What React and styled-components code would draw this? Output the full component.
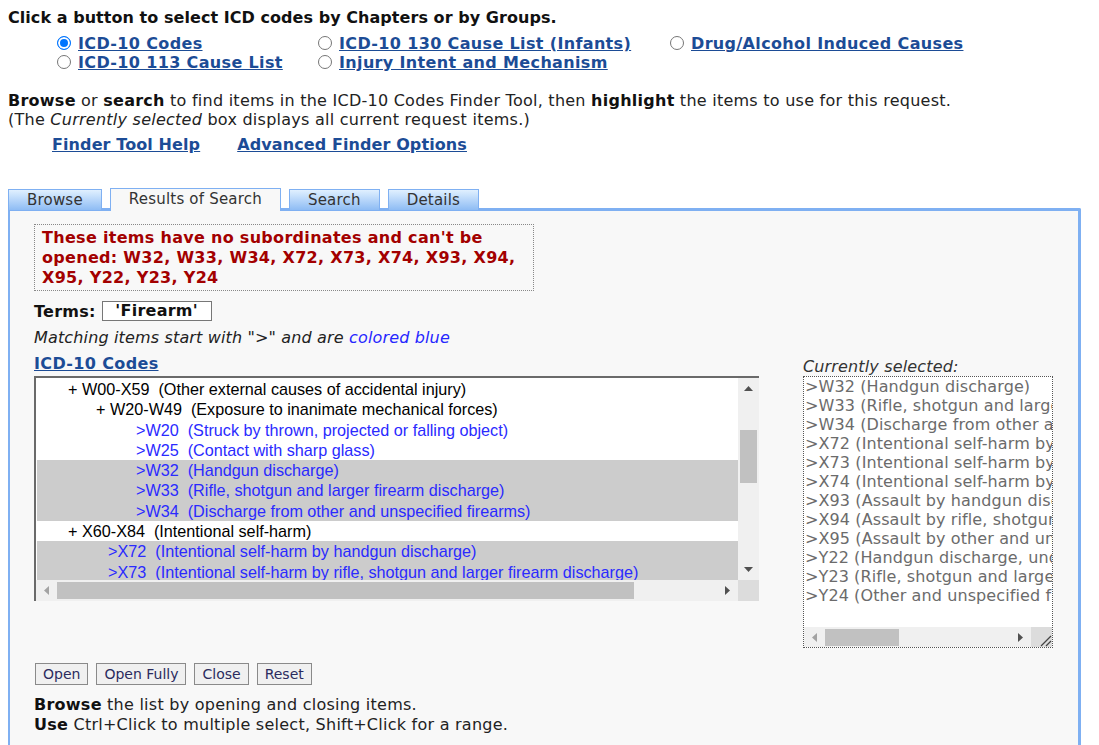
import React from "react";
import styled, { createGlobalStyle } from "styled-components";

const GlobalStyle = createGlobalStyle`
  body {
    margin: 8px;
    background: #fff;
    font-family: "DejaVu Sans", Verdana, sans-serif;
    font-size: 16px;
    letter-spacing: 0.25px;
    color: #222;
  }
`;

const Heading = styled.div`
  font-weight: bold;
  line-height: 19px;
  letter-spacing: 0.05px;
  color: #111;
`;

const ChoiceGrid = styled.div`
  display: grid;
  grid-template-columns: 261px 352px auto;
  margin: 7px 0 0 49px;
`;

const Choice = styled.label`
  display: flex;
  align-items: flex-start;
  gap: 7px;
  line-height: 19px;
`;

const Radio = styled.input`
  appearance: none;
  flex: none;
  width: 14px;
  height: 14px;
  margin: 2px 0 0;
  box-sizing: border-box;
  border-radius: 50%;
  border: 1px solid #767676;
  background: #fff;

  &:checked {
    border: 1.5px solid #0075ff;
    background: #0075ff;
    box-shadow: inset 0 0 0 2px #fff;
  }
`;

const BlueLink = styled.a`
  font-weight: bold;
  color: #1c4c96;
  text-decoration: underline;
  letter-spacing: ${({ tight }) => (tight ? "0.1px" : "0.35px")};
  cursor: pointer;
`;

const Intro = styled.div`
  margin-top: 19px;
  line-height: 19px;
`;

const HelpLinks = styled.div`
  display: flex;
  gap: 37px;
  padding-left: 44px;
  margin-top: 6px;
  line-height: 19px;
`;

const TabBar = styled.div`
  display: flex;
  align-items: flex-end;
  gap: 8px;
  margin-top: 34px;
  margin-bottom: -3px;
  position: relative;
  z-index: 1;
`;

const Tab = styled.div`
  box-sizing: border-box;
  height: ${({ active }) => (active ? "23px" : "22px")};
  padding: 0 18px;
  font-size: 15px;
  letter-spacing: 0.2px;
  line-height: 21px;
  color: #333;
  border: 1px solid #7fb0f2;
  border-bottom: ${({ active }) => (active ? "none" : "1px solid #7fb0f2")};
  background: ${({ active }) =>
    active ? "#f8f8f8" : "linear-gradient(#e0f0ff, #8ebcf4)"};
  cursor: pointer;
`;

const Panel = styled.div`
  width: 1073px;
  box-sizing: border-box;
  background: #f8f8f8;
  border-top: 3px solid #7fb0f2;
  border-left: 2px solid #7fb0f2;
  border-right: 3px solid #7fb0f2;
  border-top-right-radius: 2px;
  padding: 13px 0 40px 24px;
`;

const Notice = styled.div`
  width: 500px;
  box-sizing: border-box;
  border: 1px dotted #888;
  padding: 3px 7px 2px;
  color: #a30000;
  font-weight: bold;
  letter-spacing: 0.3px;
  line-height: 20px;
  white-space: nowrap;
`;

const TermsRow = styled.div`
  display: flex;
  align-items: center;
  gap: 6px;
  margin-top: 10px;
`;

const Bold = styled.span`
  font-weight: bold;
  color: #111;
`;

const TermsValue = styled.div`
  width: 110px;
  box-sizing: border-box;
  border: 1px solid #777;
  background: #fff;
  font-weight: bold;
  color: #111;
  text-align: center;
  line-height: 18px;
`;

const Hint = styled.div`
  margin-top: 7px;
  font-style: italic;
  letter-spacing: 0.15px;
  line-height: 19px;
`;

const BlueWord = styled.span`
  color: #2626ff;
`;

const Columns = styled.div`
  display: flex;
  align-items: flex-start;
  gap: 44px;
  margin-top: 7px;
`;

const TreeColumn = styled.div`
  width: 725px;
  line-height: 19px;
`;

const TreeBox = styled.div`
  margin-top: 3px;
  width: 725px;
  height: 225px;
  box-sizing: border-box;
  border-top: 2px solid #6a6a6a;
  border-left: 2px solid #6a6a6a;
  background: #fff;
  display: grid;
  grid-template-columns: 1fr 21px;
  grid-template-rows: 1fr 21px;
`;

const TreeList = styled.div`
  overflow: hidden;
  padding: 1px 0 0 1px;
  font-family: "Liberation Sans", Arial, sans-serif;
  font-size: 16.2px;
  letter-spacing: 0;
`;

const TreeRow = styled.div`
  line-height: 20.3px;
  white-space: pre;
  padding-left: ${({ indent }) => indent}px;
  color: ${({ leaf }) => (leaf ? "#2a2aff" : "#000")};
  background: ${({ selected }) => (selected ? "#cccccc" : "transparent")};
`;

const VScroll = styled.div`
  background: #f0f0f0;
  display: flex;
  flex-direction: column;
  align-items: center;
`;

const HScroll = styled.div`
  background: #f0f0f0;
  display: flex;
  align-items: center;
`;

const ArrowCell = styled.div`
  flex: none;
  width: 21px;
  height: ${({ vertical }) => (vertical ? "21px" : "100%")};
  display: flex;
  align-items: center;
  justify-content: center;
`;

const VThumb = styled.div`
  width: 17px;
  height: 53px;
  margin-top: 31px;
  background: #c1c1c1;
`;

const HThumb = styled.div`
  height: 17px;
  width: ${({ size }) => size}px;
  background: #c1c1c1;
`;

const Spacer = styled.div`
  flex: 1;
`;

const Corner = styled.div`
  flex: none;
  width: 21px;
  height: 100%;
  background: #dcdcdc;
  display: flex;
  align-items: flex-end;
  justify-content: flex-end;
`;

const SelectedColumn = styled.div`
  width: 250px;
  padding-top: 3px;
`;

const SelectedLabel = styled.div`
  font-style: italic;
  letter-spacing: 0.15px;
  line-height: 19px;
  color: #333;
`;

const SelectedBox = styled.div`
  width: 250px;
  height: 272px;
  box-sizing: border-box;
  border: 1px dotted #555;
  background: #fff;
  display: flex;
  flex-direction: column;
`;

const SelectedList = styled.div`
  flex: 1;
  overflow: hidden;
  padding-left: 1px;
`;

const SelectedItem = styled.div`
  line-height: 19px;
  color: #6b6b6b;
  letter-spacing: 0.1px;
  white-space: nowrap;
`;

const SelectedScroll = styled(HScroll)`
  height: 20px;
  flex: none;
`;

const ButtonRow = styled.div`
  display: flex;
  gap: 8px;
  margin: 15px 0 0 1px;
`;

const Button = styled.button`
  height: 22px;
  box-sizing: border-box;
  padding: 0 7px;
  font-family: "DejaVu Sans", Verdana, sans-serif;
  font-size: 14px;
  line-height: 20px;
  color: #2b2b5e;
  background: #f0f0f0;
  border: 1px solid #8a8a8a;
  border-radius: 0;
  cursor: pointer;
`;

const Footer = styled.div`
  margin-top: 10px;
  line-height: 20px;
`;

const Arrow = ({ dir, light }) => {
  const fill = light ? "#a3a3a3" : "#505050";
  const shapes = {
    up: "0,5 4.5,0 9,5",
    down: "0,0 9,0 4.5,5",
    left: "5,0 5,9 0,4.5",
    right: "0,0 5,4.5 0,9",
  };
  const vertical = dir === "up" || dir === "down";
  return (
    <svg width={vertical ? 9 : 5} height={vertical ? 5 : 9}>
      <polygon points={shapes[dir]} fill={fill} />
    </svg>
  );
};

const Grip = () => (
  <svg width="14" height="14">
    <line x1="3" y1="13" x2="13" y2="3" stroke="#444" strokeWidth="1.2" />
    <line x1="8" y1="13" x2="13" y2="8" stroke="#444" strokeWidth="1.2" />
  </svg>
);

const treeRows = [
  { level: 0, text: "+ W00-X59  (Other external causes of accidental injury)" },
  { level: 1, text: "+ W20-W49  (Exposure to inanimate mechanical forces)" },
  { level: 2, leaf: true, text: ">W20  (Struck by thrown, projected or falling object)" },
  { level: 2, leaf: true, text: ">W25  (Contact with sharp glass)" },
  { level: 2, leaf: true, selected: true, text: ">W32  (Handgun discharge)" },
  { level: 2, leaf: true, selected: true, text: ">W33  (Rifle, shotgun and larger firearm discharge)" },
  { level: 2, leaf: true, selected: true, text: ">W34  (Discharge from other and unspecified firearms)" },
  { level: 0, text: "+ X60-X84  (Intentional self-harm)" },
  { level: 1, leaf: true, selected: true, text: ">X72  (Intentional self-harm by handgun discharge)" },
  { level: 1, leaf: true, selected: true, text: ">X73  (Intentional self-harm by rifle, shotgun and larger firearm discharge)" },
  { level: 1, leaf: true, selected: true, text: ">X74  (Intentional self-harm by other and unspecified firearm discharge)" },
];

const selectedItems = [
  ">W32 (Handgun discharge)",
  ">W33 (Rifle, shotgun and larger firearm discharge)",
  ">W34 (Discharge from other and unspecified firearms)",
  ">X72 (Intentional self-harm by handgun discharge)",
  ">X73 (Intentional self-harm by rifle, shotgun and larger firearm discharge)",
  ">X74 (Intentional self-harm by other and unspecified firearm discharge)",
  ">X93 (Assault by handgun discharge)",
  ">X94 (Assault by rifle, shotgun and larger firearm discharge)",
  ">X95 (Assault by other and unspecified firearm discharge)",
  ">Y22 (Handgun discharge, undetermined intent)",
  ">Y23 (Rifle, shotgun and larger firearm discharge, undetermined intent)",
  ">Y24 (Other and unspecified firearm discharge, undetermined intent)",
];

const tabs = ["Browse", "Results of Search", "Search", "Details"];

export default function App() {
  return (
    <>
      <GlobalStyle />
      <Heading>Click a button to select ICD codes by Chapters or by Groups.</Heading>
      <ChoiceGrid>
        <Choice>
          <Radio type="radio" name="set" defaultChecked />
          <BlueLink>ICD-10 Codes</BlueLink>
        </Choice>
        <Choice>
          <Radio type="radio" name="set" />
          <BlueLink>ICD-10 130 Cause List (Infants)</BlueLink>
        </Choice>
        <Choice>
          <Radio type="radio" name="set" />
          <BlueLink>Drug/Alcohol Induced Causes</BlueLink>
        </Choice>
        <Choice>
          <Radio type="radio" name="set" />
          <BlueLink>ICD-10 113 Cause List</BlueLink>
        </Choice>
        <Choice>
          <Radio type="radio" name="set" />
          <BlueLink>Injury Intent and Mechanism</BlueLink>
        </Choice>
      </ChoiceGrid>

      <Intro>
        <Bold>Browse</Bold> or <Bold>search</Bold> to find items in the ICD-10 Codes Finder Tool,
        then <Bold>highlight</Bold> the items to use for this request.
        <br />
        (The <i>Currently selected</i> box displays all current request items.)
      </Intro>
      <HelpLinks>
        <BlueLink tight>Finder Tool Help</BlueLink>
        <BlueLink tight>Advanced Finder Options</BlueLink>
      </HelpLinks>

      <TabBar>
        {tabs.map((t) => (
          <Tab key={t} active={t === "Results of Search"}>
            {t}
          </Tab>
        ))}
      </TabBar>
      <Panel>
        <Notice>
          These items have no subordinates and can't be
          <br />
          opened: W32, W33, W34, X72, X73, X74, X93, X94,
          <br />
          X95, Y22, Y23, Y24
        </Notice>
        <TermsRow>
          <Bold>Terms:</Bold>
          <TermsValue>'Firearm'</TermsValue>
        </TermsRow>
        <Hint>
          Matching items start with "&gt;" and are <BlueWord>colored blue</BlueWord>
        </Hint>

        <Columns>
          <TreeColumn>
            <BlueLink>ICD-10 Codes</BlueLink>
            <TreeBox>
              <TreeList>
                {treeRows.map((r, i) => (
                  <TreeRow
                    key={i}
                    leaf={r.leaf}
                    selected={r.selected}
                    indent={31 + 28 * r.level + (r.leaf ? 12 : 0)}
                  >
                    {r.text}
                  </TreeRow>
                ))}
              </TreeList>
              <VScroll>
                <ArrowCell vertical>
                  <Arrow dir="up" />
                </ArrowCell>
                <VThumb />
                <Spacer />
                <ArrowCell vertical>
                  <Arrow dir="down" />
                </ArrowCell>
              </VScroll>
              <HScroll>
                <ArrowCell>
                  <Arrow dir="left" light />
                </ArrowCell>
                <HThumb size={577} />
                <Spacer />
                <ArrowCell>
                  <Arrow dir="right" />
                </ArrowCell>
              </HScroll>
              <Corner />
            </TreeBox>
          </TreeColumn>

          <SelectedColumn>
            <SelectedLabel>Currently selected:</SelectedLabel>
            <SelectedBox>
              <SelectedList>
                {selectedItems.map((s) => (
                  <SelectedItem key={s}>{s}</SelectedItem>
                ))}
              </SelectedList>
              <SelectedScroll>
                <ArrowCell>
                  <Arrow dir="left" light />
                </ArrowCell>
                <HThumb size={74} />
                <Spacer />
                <ArrowCell>
                  <Arrow dir="right" />
                </ArrowCell>
                <Corner>
                  <Grip />
                </Corner>
              </SelectedScroll>
            </SelectedBox>
          </SelectedColumn>
        </Columns>

        <ButtonRow>
          <Button>Open</Button>
          <Button>Open Fully</Button>
          <Button>Close</Button>
          <Button>Reset</Button>
        </ButtonRow>
        <Footer>
          <Bold>Browse</Bold> the list by opening and closing items.
          <br />
          <Bold>Use</Bold> Ctrl+Click to multiple select, Shift+Click for a range.
        </Footer>
      </Panel>
    </>
  );
}
